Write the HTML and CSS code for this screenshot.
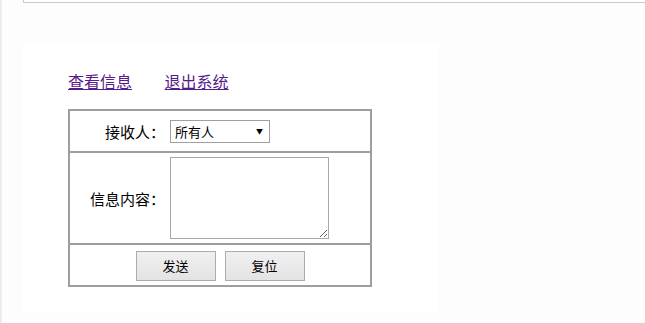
FILE: index.html
```html
<!DOCTYPE html>
<html lang="zh-CN">
<head>
  <meta charset="UTF-8">
  <title>发送信息</title>
  <link rel="stylesheet" href="styles.css">
</head>
<body>
  <div class="top-frame"></div>
  <div class="panel">
    <div class="nav">
      <a href="#">查看信息</a>
      <a href="#">退出系统</a>
    </div>
    <table class="send-form">
      <tr class="row-short">
        <td class="label">接收人：</td>
        <td class="field">
          <span class="select-wrap">
            <select class="receiver">
              <option>所有人</option>
            </select>
          </span>
        </td>
      </tr>
      <tr>
        <td class="label">信息内容：</td>
        <td class="field">
          <textarea class="content"></textarea>
        </td>
      </tr>
      <tr class="row-short">
        <td class="actions" colspan="2">
          <div class="buttons">
            <button type="submit">发送</button>
            <button type="reset">复位</button>
          </div>
        </td>
      </tr>
    </table>
  </div>
</body>
</html>
```

FILE: styles.css
```css
body {
  margin: 0;
  min-height: 323px;
  background-color: #fdfdfd;
  border-left: 2px solid #ececec;
  font-family: "Noto Sans CJK SC", "DejaVu Sans", sans-serif;
  font-size: 14px;
}

.top-frame {
  height: 2px;
  margin-left: 21px;
  background-color: #fff;
  border-left: 1px solid #c8c8c8;
  border-bottom: 1px solid #c8c8c8;
}

.panel {
  width: 370px;
  height: 242px;
  margin: 40px 0 0 20px;
  padding: 28px 0 0 46px;
  background-color: #fff;
}

.nav {
  line-height: 20px;
  font-size: 16px;
  margin-bottom: 18px;
}

.nav a {
  color: #551a8b;
  margin-right: 29px;
}

.send-form {
  width: 304px;
  border-collapse: collapse;
  border: 2px solid #9e9e9e;
}

.send-form tr {
  border-bottom: 2px solid #9e9e9e;
}

.send-form td {
  padding: 4px 0;
}

.row-short td {
  height: 32px;
}

.send-form .label {
  width: 95px;
  padding-right: 5px;
  text-align: right;
  font-size: 15px;
  color: #000;
}

/* small black arrow like the old windows select */
.select-wrap {
  position: relative;
  display: block;
  width: 100px;
}

.select-wrap::after {
  content: "▼";
  position: absolute;
  right: 7px;
  top: 6px;
  font-size: 7px;
  line-height: 10px;
  color: #000;
  pointer-events: none;
}

.receiver {
  width: 100px;
  height: 23px;
  padding: 0 4px;
  font-family: inherit;
  font-size: 13px;
  border: 1px solid #a0a0a0;
  background-color: #fff;
  display: block;
  appearance: none;
  -webkit-appearance: none;
  border-radius: 0;
}

.content {
  display: block;
  width: 159px;
  height: 82px;
  box-sizing: border-box;
  border: 1px solid #a9a9a9;
  margin: 0;
  resize: both;
}

.buttons {
  display: flex;
  justify-content: center;
  gap: 9px;
  padding-top: 1px;
}

.buttons button {
  width: 80px;
  height: 30px;
  font-family: inherit;
  font-size: 13px;
  border: 1px solid #acacac;
  border-radius: 0;
  background: linear-gradient(#f0f0f0, #e3e3e3);
}
```
